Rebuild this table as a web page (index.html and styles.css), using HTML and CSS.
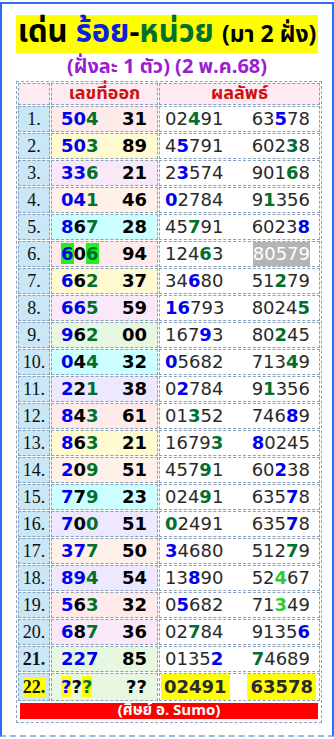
FILE: index.html
```html
<!DOCTYPE html>
<html lang="th">
<head>
    <meta charset="UTF-8">
    <meta name="viewport" content="width=device-width, initial-scale=1.0">
    <title>เด่น ร้อย-หน่วย</title>
    <link rel="stylesheet" href="styles.css">
</head>
<body>
    <div class="frame">
        <div class="title-wrap">
            <h1 class="title"><span class="k">เด่น </span><span class="b">ร้อย</span><span class="k">-</span><span class="g">หน่วย</span> <span class="small">(มา 2 ฝั่ง)</span></h1>
        </div>
        <p class="subtitle">(ฝั่งละ 1 ตัว) (2 พ.ค.68)</p>

        <table class="results">
            <colgroup>
                <col class="c-no">
                <col class="c-pick">
                <col class="c-res">
            </colgroup>
            <tr class="head">
                <td class="no"></td>
                <td class="hd">เลขที่ออก</td>
                <td class="hd">ผลลัพธ์</td>
            </tr>
            <tr>
                <td class="no">1.</td>
                <td class="pick bg-pink"><div class="pair"><span><b class="b">5</b><b class="b">0</b><b class="g">4</b></span><span>31</span></div></td>
                <td class="res"><div class="pair"><span>02<b class="g">4</b>91</span><span>63<b class="b">5</b>78</span></div></td>
            </tr>
            <tr>
                <td class="no">2.</td>
                <td class="pick bg-yellow"><div class="pair"><span><b class="b">5</b><b class="b">0</b><b class="g">3</b></span><span>89</span></div></td>
                <td class="res"><div class="pair"><span>4<b class="b">5</b>791</span><span>602<b class="g">3</b>8</span></div></td>
            </tr>
            <tr>
                <td class="no">3.</td>
                <td class="pick bg-lilac"><div class="pair"><span><b class="b">3</b><b class="b">3</b><b class="g">6</b></span><span>21</span></div></td>
                <td class="res"><div class="pair"><span>2<b class="b">3</b>574</span><span>901<b class="g">6</b>8</span></div></td>
            </tr>
            <tr>
                <td class="no">4.</td>
                <td class="pick bg-peach"><div class="pair"><span><b class="b">0</b><b class="b">4</b><b class="g">1</b></span><span>46</span></div></td>
                <td class="res"><div class="pair"><span><b class="b">0</b>2784</span><span>9<b class="g">1</b>356</span></div></td>
            </tr>
            <tr>
                <td class="no">5.</td>
                <td class="pick bg-cyan"><div class="pair"><span><b class="b">8</b><b>6</b><b class="g">7</b></span><span>28</span></div></td>
                <td class="res"><div class="pair"><span>45<b class="g">7</b>91</span><span>6023<b class="b">8</b></span></div></td>
            </tr>
            <tr>
                <td class="no">6.</td>
                <td class="pick bg-pink"><div class="pair"><span><b class="b hl-green">6</b><b>0</b><b class="g hl-green">6</b></span><span>94</span></div></td>
                <td class="res"><div class="pair"><span>124<b class="g">6</b>3</span><span class="gray">80579</span></div></td>
            </tr>
            <tr>
                <td class="no">7.</td>
                <td class="pick bg-yellow"><div class="pair"><span><b class="b">6</b><b>6</b><b class="g">2</b></span><span>37</span></div></td>
                <td class="res"><div class="pair"><span>34<b class="b">6</b>80</span><span>51<b class="g">2</b>79</span></div></td>
            </tr>
            <tr>
                <td class="no">8.</td>
                <td class="pick bg-lilac"><div class="pair"><span><b class="b">6</b><b class="b">6</b><b class="g">5</b></span><span>59</span></div></td>
                <td class="res"><div class="pair"><span><b class="b">16</b>793</span><span>8024<b class="g">5</b></span></div></td>
            </tr>
            <tr>
                <td class="no">9.</td>
                <td class="pick bg-green"><div class="pair"><span><b class="b">9</b><b>6</b><b class="g">2</b></span><span>00</span></div></td>
                <td class="res"><div class="pair"><span>167<b class="b">9</b>3</span><span>80<b class="g">2</b>45</span></div></td>
            </tr>
            <tr>
                <td class="no">10.</td>
                <td class="pick bg-cyan"><div class="pair"><span><b class="b">0</b><b>4</b><b class="g">4</b></span><span>32</span></div></td>
                <td class="res"><div class="pair"><span><b class="b">0</b>5682</span><span>713<b class="g">4</b>9</span></div></td>
            </tr>
            <tr>
                <td class="no">11.</td>
                <td class="pick bg-violet"><div class="pair"><span><b class="b">2</b><b>2</b><b class="g">1</b></span><span>38</span></div></td>
                <td class="res"><div class="pair"><span>0<b class="b">2</b>784</span><span>9<b class="g">1</b>356</span></div></td>
            </tr>
            <tr>
                <td class="no">12.</td>
                <td class="pick bg-pink"><div class="pair"><span><b class="b">8</b><b>4</b><b class="g">3</b></span><span>61</span></div></td>
                <td class="res"><div class="pair"><span>01<b class="g">3</b>52</span><span>746<b class="b">8</b>9</span></div></td>
            </tr>
            <tr>
                <td class="no">13.</td>
                <td class="pick bg-yellow"><div class="pair"><span><b class="b">8</b><b>6</b><b class="g">3</b></span><span>21</span></div></td>
                <td class="res"><div class="pair"><span>1679<b class="g">3</b></span><span><b class="b">8</b>0245</span></div></td>
            </tr>
            <tr>
                <td class="no">14.</td>
                <td class="pick bg-peach"><div class="pair"><span><b class="b">2</b><b>0</b><b class="g">9</b></span><span>51</span></div></td>
                <td class="res"><div class="pair"><span>457<b class="g">9</b>1</span><span>60<b class="b">2</b>38</span></div></td>
            </tr>
            <tr>
                <td class="no">15.</td>
                <td class="pick bg-cyan"><div class="pair"><span><b class="b">7</b><b>7</b><b class="g">9</b></span><span>23</span></div></td>
                <td class="res"><div class="pair"><span>024<b class="g">9</b>1</span><span>635<b class="b">7</b>8</span></div></td>
            </tr>
            <tr>
                <td class="no">16.</td>
                <td class="pick bg-violet"><div class="pair"><span><b class="b">7</b><b>0</b><b class="g">0</b></span><span>51</span></div></td>
                <td class="res"><div class="pair"><span><b class="g">0</b>2491</span><span>635<b class="b">7</b>8</span></div></td>
            </tr>
            <tr>
                <td class="no">17.</td>
                <td class="pick bg-peach"><div class="pair"><span><b class="b">3</b><b class="b">7</b><b class="g">7</b></span><span>50</span></div></td>
                <td class="res"><div class="pair"><span><b class="b">3</b>4680</span><span>512<b class="g">7</b>9</span></div></td>
            </tr>
            <tr>
                <td class="no">18.</td>
                <td class="pick bg-violet"><div class="pair"><span><b class="b">8</b><b class="b">9</b><b class="g">4</b></span><span>54</span></div></td>
                <td class="res"><div class="pair"><span>13<b class="b">8</b>90</span><span>52<b class="lg">4</b>67</span></div></td>
            </tr>
            <tr>
                <td class="no">19.</td>
                <td class="pick bg-pink"><div class="pair"><span><b class="b">5</b><b>6</b><b class="g">3</b></span><span>32</span></div></td>
                <td class="res"><div class="pair"><span>0<b class="b">5</b>682</span><span>71<b class="lg">3</b>49</span></div></td>
            </tr>
            <tr>
                <td class="no">20.</td>
                <td class="pick bg-lilac"><div class="pair"><span><b class="b">6</b><b>8</b><b class="g">7</b></span><span>36</span></div></td>
                <td class="res"><div class="pair"><span>02<b class="g">7</b>84</span><span>9135<b class="b">6</b></span></div></td>
            </tr>
            <tr>
                <td class="no strong">21.</td>
                <td class="pick bg-green"><div class="pair"><span><b class="b">2</b><b class="b">2</b><b class="b">7</b></span><span>85</span></div></td>
                <td class="res"><div class="pair"><span>0135<b class="b">2</b></span><span><b class="g">7</b>4689</span></div></td>
            </tr>
            <tr class="last">
                <td class="no strong"><span class="hl">22.</span></td>
                <td class="pick bg-green"><div class="pair"><span><b class="b hl">?</b><b>?</b><b class="g hl">?</b></span><span>??</span></div></td>
                <td class="res bold"><div class="pair"><span class="hl">02491</span><span class="hl">63578</span></div></td>
            </tr>
            <tr class="foot">
                <td colspan="3"><div class="credit">(ศิษย์ อ. Sumo)</div></td>
            </tr>
        </table>
    </div>
</body>
</html>
```

FILE: styles.css
```css
body {
    margin: 0;
    padding-top: 2px;
    background-color: #fff;
    font-family: Tahoma, "Noto Sans Thai", "DejaVu Sans", sans-serif;
}
.frame {
    border: 2px solid #2f6cf0;
    border-bottom: 2px dashed #9db8e8;
    height: 735px;
    box-sizing: border-box;
}
.title-wrap {
    text-align: center;
    padding-top: 11px;
}
.title {
    display: inline-block;
    margin: 0;
    background-color: #ffff00;
    font-size: 31px;
    line-height: 36px;
    font-weight: bold;
    padding: 0 2px;
    white-space: nowrap;
}
.title .k { color: #000; }
.title .b { color: #0a1fe0; }
.title .g { color: #00702e; }
.title .small {
    font-size: 23px;
    color: #000;
}
.subtitle {
    margin: 0;
    text-align: center;
    color: #9a1ed0;
    font-weight: bold;
    font-size: 20px;
    line-height: 28px;
}
.results {
    margin: 0 0 0 14px;
    width: 306px;
    border: 1px dashed #8aa2bc;
    border-spacing: 1px;
    table-layout: fixed;
}
.c-no { width: 32px; }
.c-pick { width: 107px; }
.results td {
    border: 1px dashed #8aa2bc;
    height: 24px;
    padding: 0;
    white-space: nowrap;
}
.results .head td {
    height: 20px;
    line-height: 20px;
    background-color: #fdeaf2;
}
.results .last td { height: 26px; }
.hd {
    text-align: center;
    color: #d01010;
    font-weight: bold;
    font-size: 18px;
}
.no {
    background-color: #c9e7f6;
    font-family: "Liberation Serif", serif;
    font-size: 18px;
    line-height: 24px;
    color: #111;
    text-align: center;
}
.no.strong { font-weight: bold; }
.pair {
    display: flex;
    justify-content: space-between;
    align-items: center;
    line-height: 24px;
}
.last .pair { line-height: 26px; }
.pick {
    font-family: "DejaVu Sans", sans-serif;
    font-weight: bold;
    font-size: 18px;
    color: #000;
}
.pick .pair { padding: 0 10px 0 9px; }
.pick b { font-weight: bold; }
.b { color: #0000ee; }
.g { color: #00702e; }
.lg { color: #2fcc2f; }
.res {
    background-color: #fff;
    font-family: "DejaVu Sans", sans-serif;
    font-size: 18px;
    color: #2a2a2a;
}
.res .pair { padding: 0 9px 0 5px; }
.res.bold { font-weight: bold; }
.res.bold .pair { padding: 0 3px 0 1px; }
.res.bold .hl { padding: 0 3px; }
.hl { background-color: #ffff00; }
.hl-green { background-color: #22ee22; }
.gray {
    background-color: #b4b4b4;
    color: #fff;
}
.bg-pink { background-color: #ffeaea; }
.bg-yellow { background-color: #fffad0; }
.bg-lilac { background-color: #f9e8f8; }
.bg-peach { background-color: #fff0e8; }
.bg-cyan { background-color: #ccffff; }
.bg-green { background-color: #e8f8e0; }
.bg-violet { background-color: #eee8ff; }
.results .foot td {
    height: auto;
    border: none;
    padding: 1px 2px 2px;
}
.credit {
    background-color: #ff0000;
    color: #fff;
    font-weight: bold;
    font-size: 15px;
    line-height: 16px;
    text-align: center;
}
```
